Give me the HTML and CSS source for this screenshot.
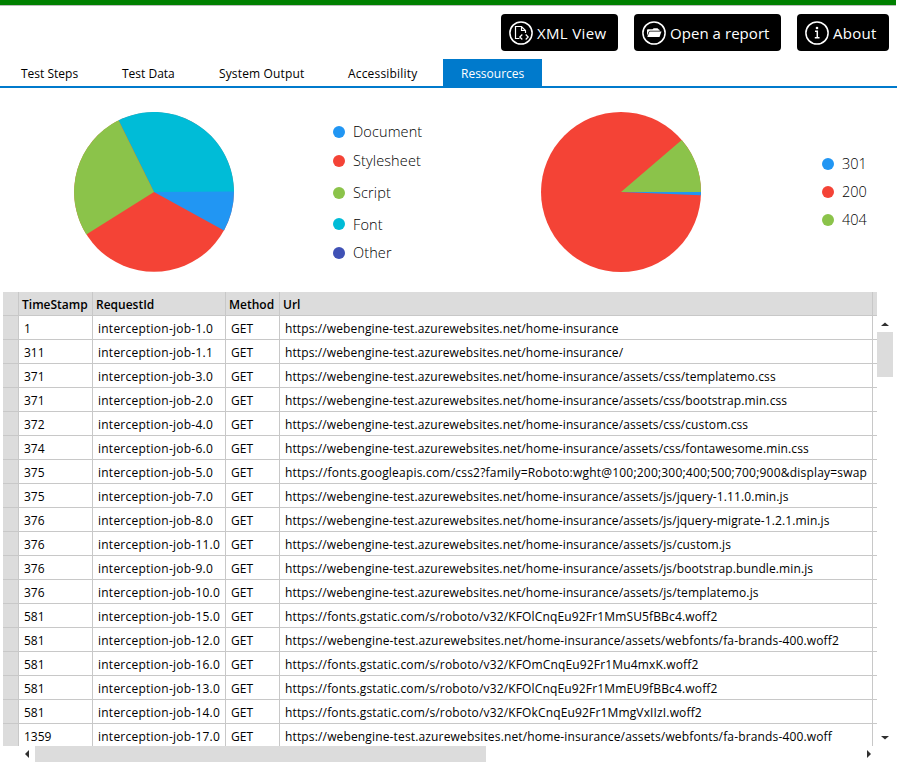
FILE: index.html
```html
<!DOCTYPE html>
<html lang="en">
<head>
<meta charset="utf-8">
<title>Test Report</title>
<link rel="stylesheet" href="styles.css">
</head>
<body>
<div class="progress"></div>
<header class="toolbar">
  <button class="btn btn-xml"><svg class="ico" viewBox="0 0 24 24"><circle cx="12" cy="12" r="11.1"/><path class="thin" d="M10.500 17.500H6.500V5.500H12.500L16.500 9.500V12M12.500 5.500V9.500H16.500"/><path class="thin" d="M13.300 13.500L10.800 16L13.300 18.500M16.700 13.500L19.200 16L16.700 18.500"/></svg><span>XML View</span></button>
  <button class="btn btn-open"><svg class="ico" viewBox="0 0 24 24"><circle cx="12" cy="12" r="11.1"/><path class="solid" d="M5 15V9.200Q5 8.200 6 8.200H10.500L11.700 7.200H15.500L16.500 8.200Q17.800 8.300 17.800 9.800H8Q7 9.800 6.500 11Z"/><path class="solid" d="M7.500 10.500H19.500L17.500 16H5.300Z"/></svg><span>Open a report</span></button>
  <button class="btn btn-about"><svg class="ico" viewBox="0 0 24 24"><circle cx="12" cy="12" r="11.1"/><circle class="solid" cx="12" cy="7" r="1.300"/><path d="M10 10.300H12.300V16.500M9.800 16.700H14.500" /></svg><span>About</span></button>
</header>
<nav class="tabs">
  <a class="tab t1">Test Steps</a><a class="tab t2">Test Data</a><a class="tab t3">System Output</a><a class="tab t4">Accessibility</a><a class="tab t5 active">Ressources</a>
</nav>
<section class="charts">
  <svg class="pie" viewBox="-80 -80 160 160"><circle r="79.800" fill="#f44336"/><path fill="#00bcd7" d="M0 0L-35.500 -71.700A80 80 0 0 1 80 -.5V0Z"/><path fill="#2196f3" d="M0 0L80 -.5A80 80 0 0 1 70 38.500Z"/><path fill="#8bc34a" d="M0 0L-67.700 42.500A80 80 0 0 1 -35.500 -71.700Z"/></svg>
  <ul class="legend types">
    <li><i class="dot blue"></i><span>Document</span></li>
    <li><i class="dot red"></i><span>Stylesheet</span></li>
    <li><i class="dot green"></i><span>Script</span></li>
    <li><i class="dot cyan"></i><span>Font</span></li>
    <li><i class="dot indigo"></i><span>Other</span></li>
  </ul>
  <svg class="pie pie-status" viewBox="-80 -80 160 160"><circle r="80" fill="#f44336"/><path fill="#8bc34a" d="M0 0L60.700 -52.100A80 80 0 0 1 80 0Z"/><path fill="#2196f3" d="M0 0H80A80 80 0 0 1 79.900 3.200Z"/></svg>
  <ul class="legend codes">
    <li><i class="dot blue"></i><span>301</span></li>
    <li><i class="dot red"></i><span>200</span></li>
    <li><i class="dot green"></i><span>404</span></li>
  </ul>
</section>
<main class="grid">
  <div class="viewport">
    <table>
      <colgroup><col class="c0"><col class="c1"><col class="c2"><col class="c3"><col class="c4"><col class="c5"></colgroup>
      <thead><tr><th></th><th>TimeStamp</th><th>RequestId</th><th>Method</th><th>Url</th><th></th></tr></thead>
      <tbody>
        <tr><th></th><td>1</td><td>interception-job-1.0</td><td>GET</td><td>https://webengine-test.azurewebsites.net/home-insurance</td><td></td></tr>
        <tr><th></th><td>311</td><td>interception-job-1.1</td><td>GET</td><td>https://webengine-test.azurewebsites.net/home-insurance/</td><td></td></tr>
        <tr><th></th><td>371</td><td>interception-job-3.0</td><td>GET</td><td>https://webengine-test.azurewebsites.net/home-insurance/assets/css/templatemo.css</td><td></td></tr>
        <tr><th></th><td>371</td><td>interception-job-2.0</td><td>GET</td><td>https://webengine-test.azurewebsites.net/home-insurance/assets/css/bootstrap.min.css</td><td></td></tr>
        <tr><th></th><td>372</td><td>interception-job-4.0</td><td>GET</td><td>https://webengine-test.azurewebsites.net/home-insurance/assets/css/custom.css</td><td></td></tr>
        <tr><th></th><td>374</td><td>interception-job-6.0</td><td>GET</td><td>https://webengine-test.azurewebsites.net/home-insurance/assets/css/fontawesome.min.css</td><td></td></tr>
        <tr class="query"><th></th><td>375</td><td>interception-job-5.0</td><td>GET</td><td>https://fonts.googleapis.com/css2?family=Roboto:wght@100;200;300;400;500;700;900&amp;display=swap</td><td></td></tr>
        <tr><th></th><td>375</td><td>interception-job-7.0</td><td>GET</td><td>https://webengine-test.azurewebsites.net/home-insurance/assets/js/jquery-1.11.0.min.js</td><td></td></tr>
        <tr><th></th><td>376</td><td>interception-job-8.0</td><td>GET</td><td>https://webengine-test.azurewebsites.net/home-insurance/assets/js/jquery-migrate-1.2.1.min.js</td><td></td></tr>
        <tr><th></th><td>376</td><td>interception-job-11.0</td><td>GET</td><td>https://webengine-test.azurewebsites.net/home-insurance/assets/js/custom.js</td><td></td></tr>
        <tr><th></th><td>376</td><td>interception-job-9.0</td><td>GET</td><td>https://webengine-test.azurewebsites.net/home-insurance/assets/js/bootstrap.bundle.min.js</td><td></td></tr>
        <tr><th></th><td>376</td><td>interception-job-10.0</td><td>GET</td><td>https://webengine-test.azurewebsites.net/home-insurance/assets/js/templatemo.js</td><td></td></tr>
        <tr class="font"><th></th><td>581</td><td>interception-job-15.0</td><td>GET</td><td>https://fonts.gstatic.com/s/roboto/v32/KFOlCnqEu92Fr1MmSU5fBBc4.woff2</td><td></td></tr>
        <tr class="font"><th></th><td>581</td><td>interception-job-12.0</td><td>GET</td><td>https://webengine-test.azurewebsites.net/home-insurance/assets/webfonts/fa-brands-400.woff2</td><td></td></tr>
        <tr class="font"><th></th><td>581</td><td>interception-job-16.0</td><td>GET</td><td>https://fonts.gstatic.com/s/roboto/v32/KFOmCnqEu92Fr1Mu4mxK.woff2</td><td></td></tr>
        <tr class="font"><th></th><td>581</td><td>interception-job-13.0</td><td>GET</td><td>https://fonts.gstatic.com/s/roboto/v32/KFOlCnqEu92Fr1MmEU9fBBc4.woff2</td><td></td></tr>
        <tr class="font"><th></th><td>581</td><td>interception-job-14.0</td><td>GET</td><td>https://fonts.gstatic.com/s/roboto/v32/KFOkCnqEu92Fr1MmgVxIIzI.woff2</td><td></td></tr>
        <tr class="font"><th></th><td>1359</td><td>interception-job-17.0</td><td>GET</td><td>https://webengine-test.azurewebsites.net/home-insurance/assets/webfonts/fa-brands-400.woff</td><td></td></tr>
      </tbody>
    </table>
  </div>
  <div class="vbar"><svg viewBox="0 0 16 16"><path d="M4 10L8 6.500L12 10Z"/></svg><div class="vthumb"></div><svg viewBox="0 0 16 16"><path d="M4 6L8 9.500L12 6Z"/></svg></div>
  <div class="hbar"><svg viewBox="0 0 16 16"><path d="M10 4L6 8L10 12Z"/></svg><div class="hthumb"></div><svg viewBox="0 0 16 16"><path d="M6 4L10 8L6 12Z"/></svg></div>
</main>
</body>
</html>
```
FILE: styles.css
```css
* { box-sizing: border-box; }
body { margin: 0; width: 897px; height: 764px; overflow: hidden; background: #fff; color: #000; font: 12px "Open Sans", "Noto Sans", sans-serif; }
.progress { height: 6px; width: 896px; background: #008000; border-bottom: 1px solid #bcbcbc; }
.toolbar { display: flex; justify-content: flex-end; gap: 16px; padding: 8px 8px 0 0; height: 53px; }
.btn { display: flex; align-items: center; height: 37px; padding: 0 0 0 8px; border: 0; border-radius: 4px; background: #000; color: #fff; font: 15px "Open Sans", sans-serif; gap: 4px; white-space: nowrap; }
.btn span { padding-top: 1px; letter-spacing: .05px; }
.btn-xml { width: 117px; }
.btn-xml span { letter-spacing: .35px; }
.btn-open { width: 147px; }
.btn-about { width: 92px; }
.btn-about span { letter-spacing: .25px; }
.ico { width: 24px; height: 24px; flex: none; fill: none; stroke: #fff; stroke-width: 1.5; }
.ico .thin { stroke-width: 1.2; }
.ico .solid { fill: #fff; stroke: none; }
.tabs { display: flex; height: 29px; border-bottom: 2px solid #007acc; }
.tab { height: 28px; line-height: 29px; white-space: nowrap; padding-left: 18px; }
.t1 { width: 104px; padding-left: 21px; }
.t2 { width: 97px; }
.t3 { width: 129px; letter-spacing: .14px; }
.t4 { width: 113px; letter-spacing: .18px; }
.t5 { width: 99px; }
.active { background: #007acc; color: #fff; }
.charts { display: flex; height: 204px; padding: 24px 0 0 74.4px; }
.pie { width: 160px; height: 160px; flex: none; }
.legend { list-style: none; margin: 0; padding: 0; font-size: 14.5px; font-weight: 300; color: #000; }
.legend li { display: flex; align-items: center; gap: 7px; height: 28px; }
.dot { width: 12px; height: 12px; border-radius: 50%; flex: none; }
.types { width: 208px; margin-left: 98.6px; padding-top: 6px; }
.types li:first-child { height: 27px; }
.types li:nth-child(2) { height: 32px; }
.types li:nth-child(3) { height: 32px; }
.types li:nth-child(4) { height: 30px; }
.types li:nth-child(5) { height: 27px; }
.types li:nth-child(2) span, .types li:nth-child(3) span { padding-bottom: 2px; }
.types span { letter-spacing: .12px; }
.codes { margin-left: 121px; padding-top: 38px; }
.codes .dot { margin-right: 1px; }
.codes span { padding-bottom: 1px; }
.blue { background: #2196f3; }
.red { background: #f44336; }
.green { background: #8bc34a; }
.cyan { background: #00bcd7; }
.indigo { background: #3f51b5; }
.types .dot { margin-right: 1px; }
.grid { display: grid; grid-template: 454px 16px / 874px 16px; margin-left: 3px; }
.viewport { overflow: hidden; }
table { width: 874px; table-layout: fixed; border-collapse: separate; border-spacing: 0; }
.c0 { width: 16px; }
.c1 { width: 74px; }
.c2 { width: 133px; }
.c3 { width: 54px; }
.c4 { width: 593px; }
.c5 { width: 4px; }
th, td { height: 24px; padding: 3px 0 0 5px; border-right: 1px solid #c8c8c8; border-bottom: 1px solid #c8c8c8; text-align: left; white-space: nowrap; line-height: 20px; }
th { background: #dcdcdc; font-weight: 600; padding-left: 3px; }
th:last-child, td:last-child { border-right: 0; }
td:nth-child(3) { letter-spacing: .24px; }
td:nth-child(5) { letter-spacing: .115px; }
.font td:nth-child(5) { letter-spacing: .15px; }
.query td:nth-child(5) { letter-spacing: .205px; }
.vbar { display: flex; flex-direction: column; padding-top: 24px; }
.vthumb { height: 45px; background: #dcdcdc; margin-bottom: auto; }
.vbar svg, .hbar svg { width: 16px; height: 16px; flex: none; fill: #303030; }
.hbar { display: flex; padding-left: 16px; }
.hthumb { width: 451px; background: #dcdcdc; margin-right: auto; }
```
